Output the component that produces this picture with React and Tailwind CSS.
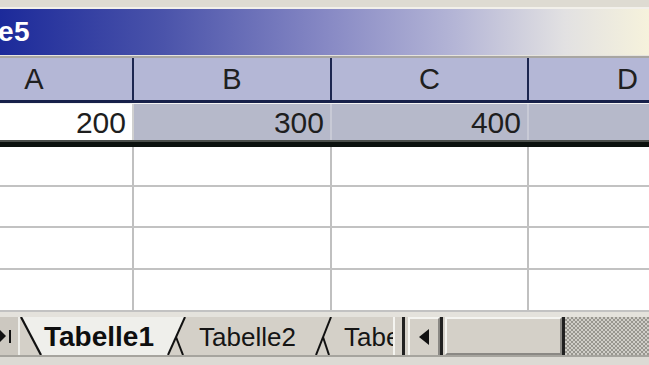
export default function App() {
  const cols = ["A", "B", "C", "D"];
  const row1 = ["200", "300", "400", ""];
  return (
    <div className="w-[649px] h-[365px] overflow-hidden bg-[#d4d0c8] flex flex-col font-['Liberation_Sans',Arial,sans-serif] text-[#1a1a1a]">
      {/* top strip */}
      <div className="h-[9px] shrink-0 bg-[#dedbd2] border-b-2 border-[#f2f0ea]" />
      {/* title bar */}
      <div className="h-[46px] shrink-0 flex items-center bg-[linear-gradient(90deg,#1c2a9a_0%,#4a53aa_25%,#8688c4_50%,#b4b5d6_70%,#e2e1e2_87%,#f6f2dc_100%)]">
        <span className="-ml-[2px] text-white font-bold text-[28px] leading-none tracking-[0.5px]">e5</span>
      </div>
      <div className="h-[3px] shrink-0 bg-[#a8a6a2] border-t border-[#e6e4de]" />
      {/* sheet */}
      <div className="flex flex-col -ml-[64px] w-[792px] shrink-0">
        {/* header */}
        <div className="grid grid-cols-[198px_198px_197px_199px] h-[45px] bg-[#b4b7d6] border-b-[3px] border-[#17214a]">
          {cols.map((c) => (
            <div key={c} className="flex items-center justify-center border-r-2 border-[#1c2650] text-[29px] leading-none text-[#202020]">
              {c}
            </div>
          ))}
        </div>
        {/* row 1 */}
        <div className="grid grid-cols-[198px_198px_197px_199px] h-[37px] border-t border-[#f4f4f4]">
          {row1.map((v, i) => (
            <div
              key={i}
              className={
                "flex items-end justify-end pr-[6px] pb-[2px] border-r-2 text-[30px] leading-none text-[#1e1e1e] " +
                (i === 0 ? "bg-white border-[#d0d0d0]" : "bg-[#b6b9ca] border-[#c8cad6]")
              }
            >
              {v}
            </div>
          ))}
        </div>
        <div className="h-[7px] bg-[#0c120e] border-t-2 border-[#4a4e4a]" />
        {[40, 41, 42, 42].map((h, r) => (
          <div key={r} className="grid grid-cols-[198px_198px_197px_199px] bg-white border-b-2 border-[#c2c2c2]" style={{ height: h }}>
            {cols.map((c) => (
              <div key={c} className="border-r-2 border-[#c0c0c0]" />
            ))}
          </div>
        ))}
      </div>
      {/* tab bar */}
      <div className="h-[43px] shrink-0 flex items-stretch bg-[#d4d0c8] border-t-[5px] border-[#e4e2dc]">
        {/* nav */}
        <div className="w-[20px] flex items-center gap-[2px] bg-[#ccc8c0] border-r-2 border-[#eeeeea]">
          <svg width="8" height="14" viewBox="0 0 8 14" className="-ml-[1px]">
            <polygon points="0,0 7,7 0,14" fill="#111" />
          </svg>
          <div className="w-[2px] h-[13px] bg-[#111]" />
        </div>
        {/* edge 1 */}
        <svg width="24" height="38" viewBox="0 0 24 38" className="shrink-0">
          <polygon points="1,0 24,0 24,38 21,38" fill="#efefeb" />
          <line x1="1" y1="0" x2="21" y2="38" stroke="#111" strokeWidth="2.2" />
        </svg>
        <div className="w-[122px] bg-[#efefeb] flex items-center font-bold text-[28px] leading-none pt-[2px] text-[#0e0e0e] whitespace-nowrap">
          Tabelle1
        </div>
        {/* edge 2 */}
        <svg width="22" height="38" viewBox="0 0 22 38" className="shrink-0">
          <polygon points="0,0 19,0 2,38 0,38" fill="#efefeb" />
          <line x1="19" y1="0" x2="2" y2="38" stroke="#111" strokeWidth="2" />
          <line x1="10" y1="20" x2="17" y2="38" stroke="#111" strokeWidth="2" />
        </svg>
        <div className="w-[126px] flex items-center pl-[11px] text-[26px] leading-none pt-[2px] text-[#151515] whitespace-nowrap">
          Tabelle2
        </div>
        {/* edge 3 */}
        <svg width="20" height="38" viewBox="0 0 20 38" className="shrink-0">
          <line x1="17" y1="0" x2="2" y2="38" stroke="#111" strokeWidth="2" />
          <line x1="9" y1="20" x2="15" y2="38" stroke="#111" strokeWidth="2" />
        </svg>
        <div className="w-[59px] overflow-hidden whitespace-nowrap flex items-center pl-[10px] text-[26px] leading-none pt-[2px] text-[#151515]">
          Tabelle3
        </div>
        {/* splitter */}
        <div className="w-[2px] bg-[#f4f4f0]" />
        <div className="w-[7px]" />
        <div className="w-[3px] bg-[#202020]" />
        <div className="w-[3px]" />
        {/* scroll left button */}
        <div className="w-[32px] flex items-center justify-center border-l-2 border-t-2 border-[#f4f4f0] border-r-2 border-r-[#8a8884]">
          <svg width="10" height="16" viewBox="0 0 10 16">
            <polygon points="10,0 0,8 10,16" fill="#111" />
          </svg>
        </div>
        <div className="w-[3px] bg-[#202020]" />
        <div className="w-[2px]" />
        {/* thumb */}
        <div className="w-[117px] border-l-2 border-t-2 border-[#f4f4f0] border-r-2 border-r-[#8a8884] border-b-2 border-b-[#8a8884] bg-[#d4d0c8]" />
        <div className="w-[3px] bg-[#202020]" />
        {/* track */}
        <div className="flex-1 bg-[repeating-conic-gradient(#98968f_0%_25%,#d0cec8_0%_50%)] bg-[length:4px_4px]" />
      </div>
      <div className="flex-1 bg-[#dcdad4] border-t-2 border-[#a6a49e]" />
    </div>
  );
}
